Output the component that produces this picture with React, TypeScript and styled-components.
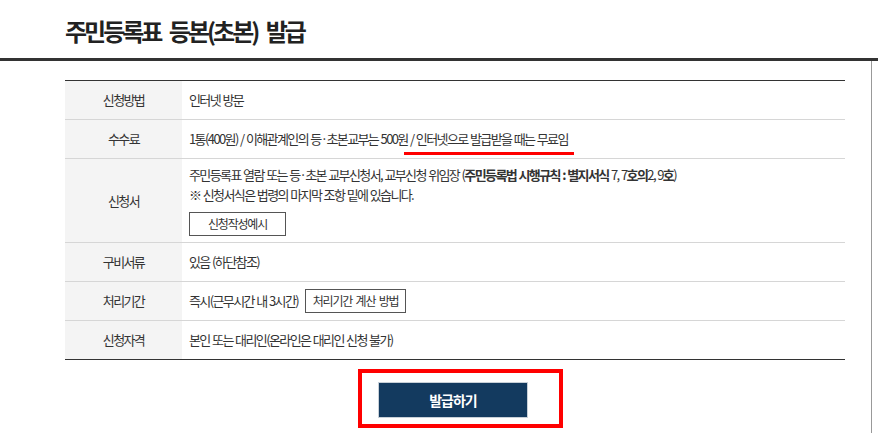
import React from "react";
import styled, { createGlobalStyle } from "styled-components";

const GlobalStyle = createGlobalStyle`
  html, body {
    margin: 0;
    padding: 0;
    background: #fff;
  }
  body {
    font-family: "Noto Sans CJK KR", "Noto Sans", sans-serif;
    color: #333;
  }
`;

const Page = styled.div`
  width: 878px;
  height: 433px;
  overflow: hidden;
`;

const Header = styled.header`
  padding: 16px 0 12px 65px;
  border-bottom: 3px solid #333;
`;

const Title = styled.h2`
  margin: 0;
  font-size: 24px;
  line-height: 30px;
  font-weight: 700;
  letter-spacing: -3px;
  word-spacing: 6px;
  color: #222;
`;

const Body = styled.div`
  box-sizing: border-box;
  width: 872px;
  height: 380px;
  padding: 19px 0 0 65px;
  border-right: 1px solid #999;
`;

const InfoTable = styled.div`
  width: 780px;
  border-top: 1px solid #333;
  border-bottom: 1px solid #333;
`;

const Row = styled.div`
  display: grid;
  grid-template-columns: 117px 1fr;
  min-height: 38px;
  border-bottom: 1px solid #d6d6d6;

  &:last-child {
    border-bottom: none;
  }
`;

const Label = styled.div`
  display: flex;
  align-items: center;
  justify-content: center;
  background: #f4f4f4;
  font-size: 13px;
  line-height: 18px;
  letter-spacing: -1.6px;
  color: #333;
`;

const Cell = styled.div<{ $stack?: boolean }>`
  display: flex;
  flex-direction: ${(p) => (p.$stack ? "column" : "row")};
  align-items: ${(p) => (p.$stack ? "flex-start" : "center")};
  gap: 7px;
  padding: ${(p) => (p.$stack ? "6px 0 6px 7px" : "0 0 0 7px")};
  font-size: 13px;
  line-height: 18px;
  letter-spacing: -1.6px;
  word-spacing: 1px;
  color: #333;
`;

const Lines = styled.div`
  line-height: 20px;
`;

const Strong = styled.b`
  font-weight: 700;
`;

const Marked = styled.span`
  position: relative;
  &::after {
    content: "";
    position: absolute;
    left: -4px;
    right: -6px;
    bottom: -7px;
    height: 3px;
    background: #ff0000;
  }
`;

const SmallButton = styled.button<{ $w: number }>`
  box-sizing: border-box;
  width: ${(p) => p.$w}px;
  height: 24px;
  padding: 0;
  border: 1px solid #555;
  background: #fff;
  font-family: inherit;
  font-size: 12px;
  line-height: 18px;
  letter-spacing: -1.2px;
  word-spacing: 2px;
  color: #333;
  cursor: pointer;
`;

const Actions = styled.div`
  width: 780px;
  display: flex;
  justify-content: center;
  margin-top: 9px;
`;

const Highlight = styled.div`
  margin-left: 11px;
  padding: 9px 31px 6px 16px;
  border: 4px solid #ff0000;
`;

const IssueButton = styled.button`
  display: block;
  width: 150px;
  height: 36px;
  border: 1px solid #c8d0d8;
  background: #133a5f;
  color: #fff;
  font-family: inherit;
  font-size: 14px;
  font-weight: 700;
  letter-spacing: -1px;
  cursor: pointer;
`;

export default function App() {
  return (
    <Page>
      <GlobalStyle />
      <Header>
        <Title>주민등록표 등본(초본) 발급</Title>
      </Header>
      <Body>
        <InfoTable>
          <Row>
            <Label>신청방법</Label>
            <Cell>인터넷 방문</Cell>
          </Row>
          <Row>
            <Label>수수료</Label>
            <Cell>
              <span>
                1통(400원) / 이해관계인의 등·초본교부는 500원
                <Marked> / 인터넷으로 발급받을 때는 무료임</Marked>
              </span>
            </Cell>
          </Row>
          <Row>
            <Label>신청서</Label>
            <Cell $stack>
              <Lines>
                주민등록표 열람 또는 등·초본 교부신청서, 교부신청 위임장 (
                <Strong>주민등록법 시행규칙 : 별지서식</Strong> 7, 7
                <Strong>호의</Strong>2, 9<Strong>호</Strong>)
                <br />※ 신청서식은 법령의 마지막 조항 밑에 있습니다.
              </Lines>
              <SmallButton $w={97}>신청작성예시</SmallButton>
            </Cell>
          </Row>
          <Row>
            <Label>구비서류</Label>
            <Cell>있음 (하단참조)</Cell>
          </Row>
          <Row>
            <Label>처리기간</Label>
            <Cell>
              <span>즉시(근무시간 내 3시간)</span>
              <SmallButton $w={101}>처리기간 계산 방법</SmallButton>
            </Cell>
          </Row>
          <Row>
            <Label>신청자격</Label>
            <Cell>본인 또는 대리인(온라인은 대리인 신청 불가)</Cell>
          </Row>
        </InfoTable>
        <Actions>
          <Highlight>
            <IssueButton>발급하기</IssueButton>
          </Highlight>
        </Actions>
      </Body>
    </Page>
  );
}
